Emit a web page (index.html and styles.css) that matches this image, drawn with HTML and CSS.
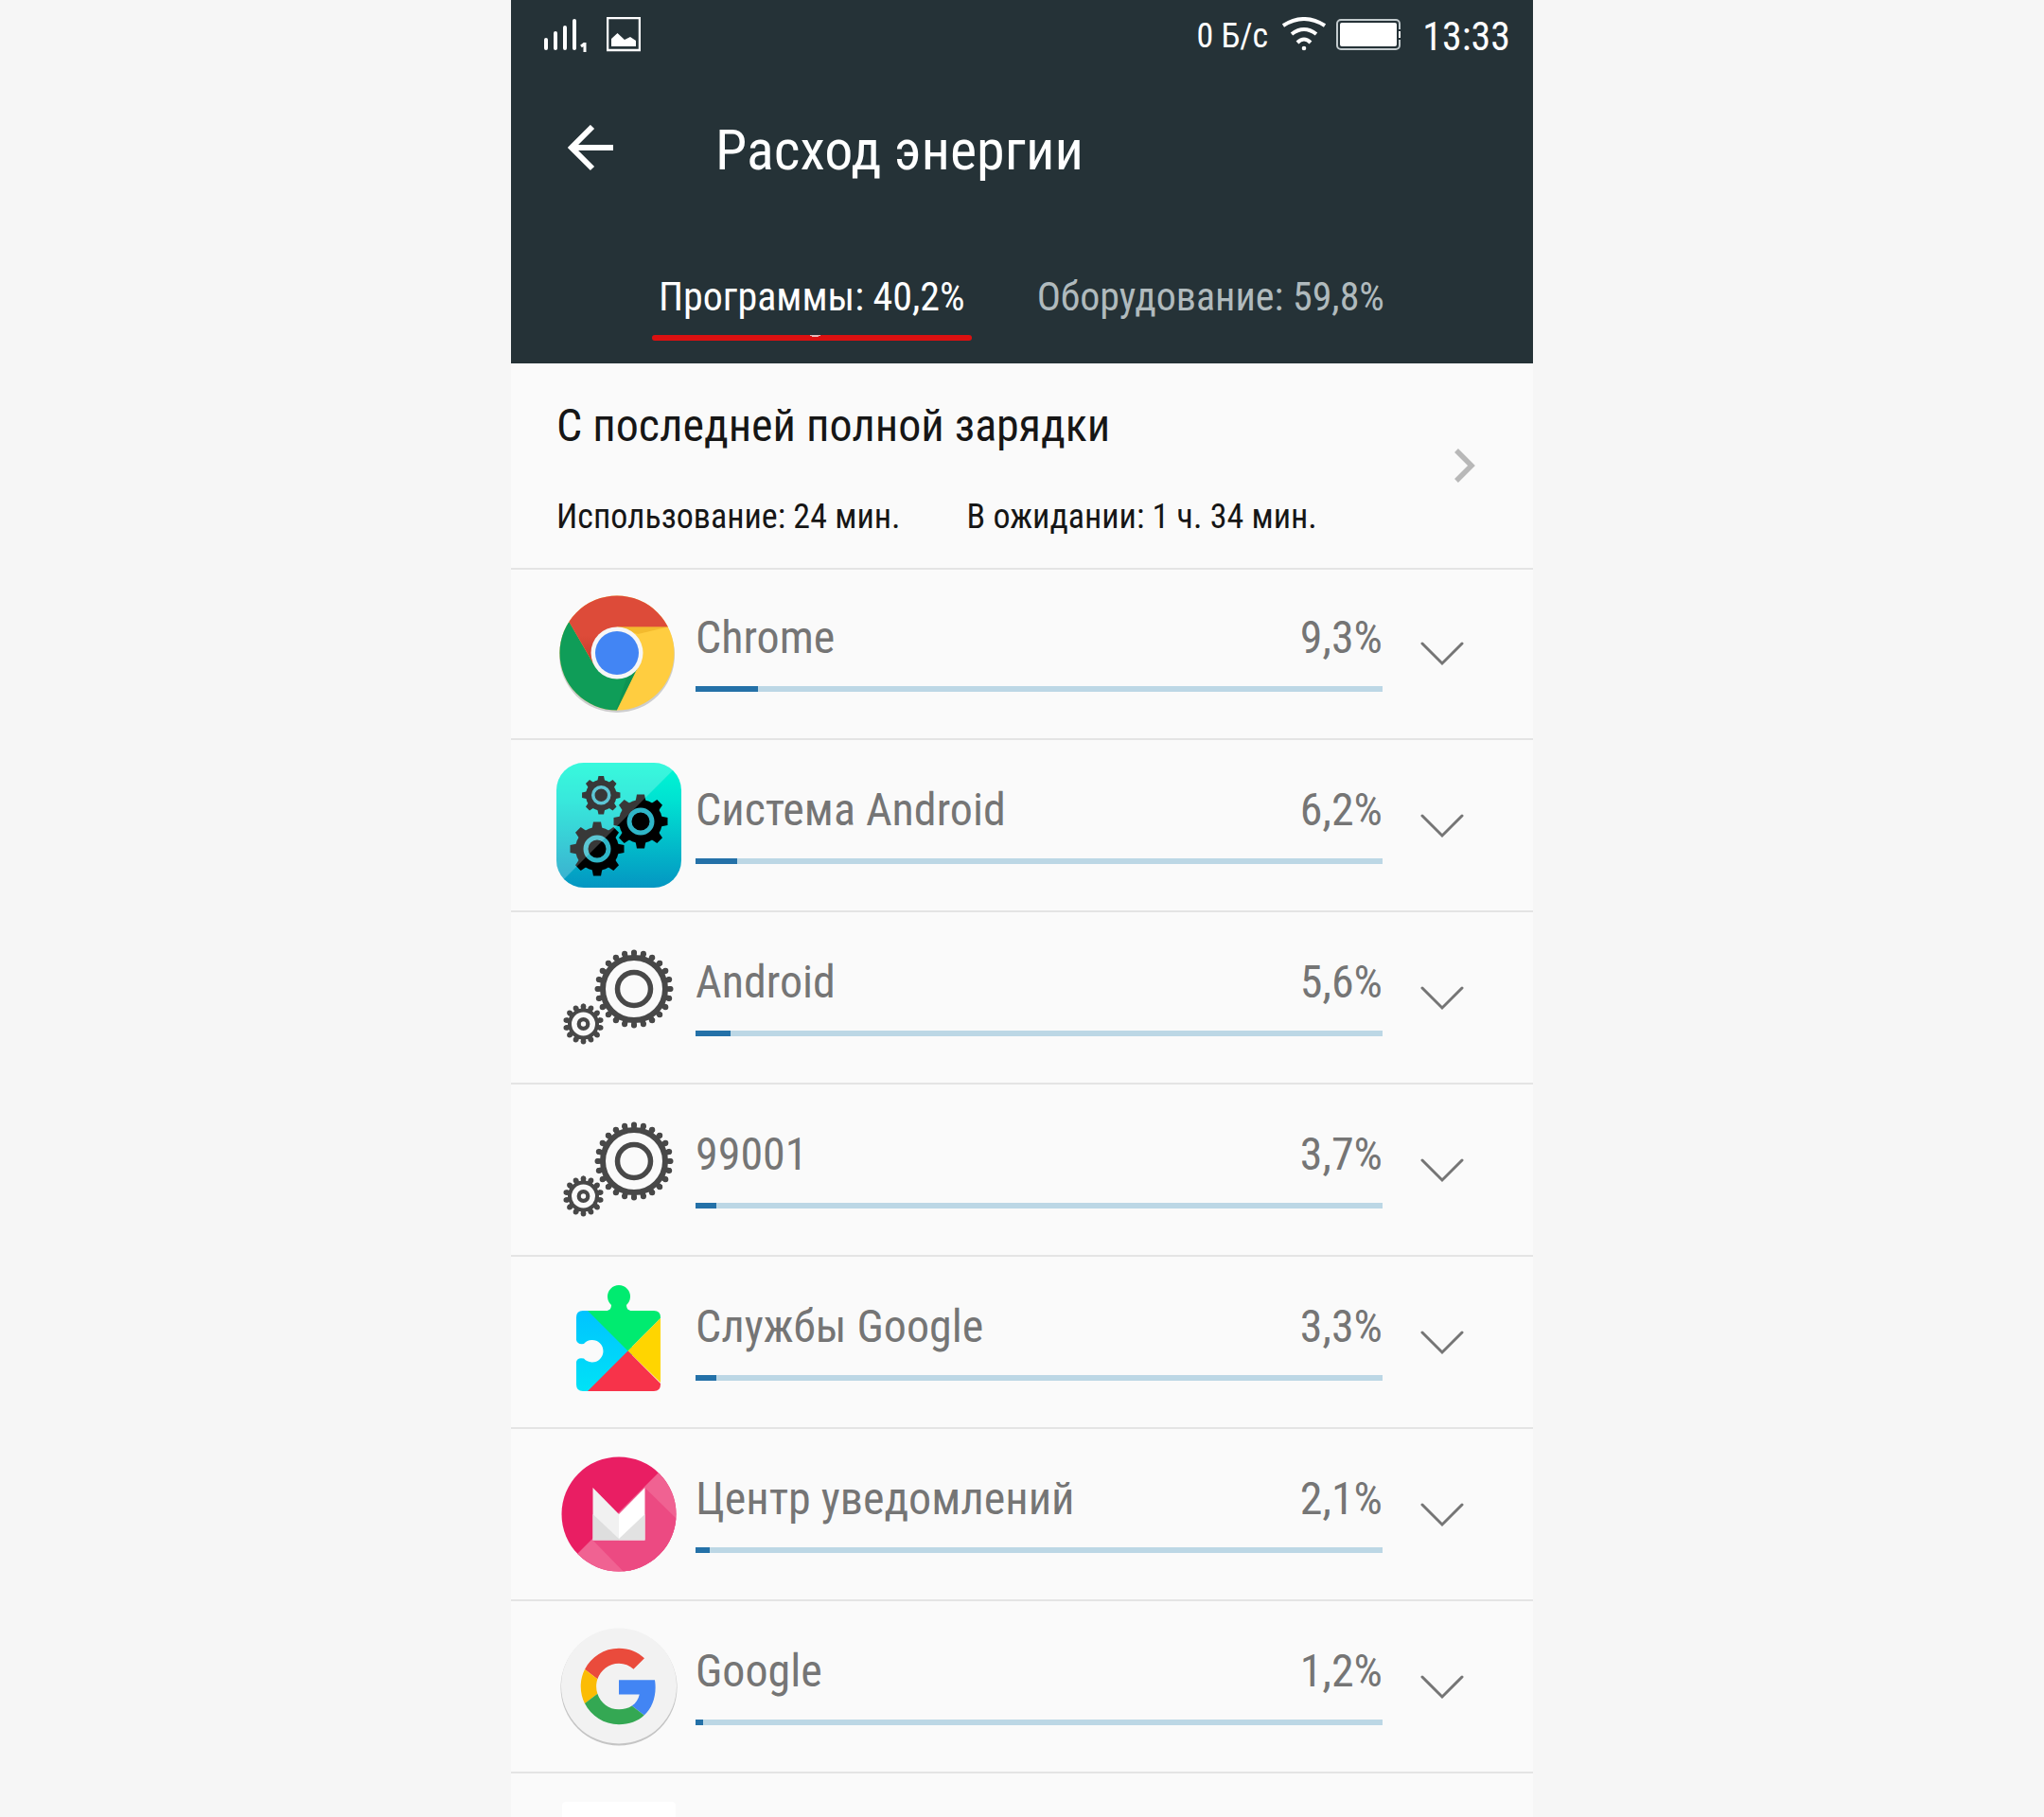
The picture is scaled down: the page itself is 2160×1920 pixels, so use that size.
FILE: index.html
```html
<!DOCTYPE html>
<html lang="ru">
<head>
  <meta charset="UTF-8">
  <title>Расход энергии</title>
  <link rel="stylesheet" href="styles.css">
</head>
<body>

  <!-- shared icons -->
  <svg class="sprite" aria-hidden="true">
    <symbol id="chevron" viewBox="0 0 48 32">
      <path d="M3 6 24 27 45 6" fill="none" stroke="#757575" stroke-width="3" stroke-linecap="round"/>
    </symbol>
    <symbol id="gears" viewBox="0 0 132 132">
      <g fill="none" stroke="#484848">
        <circle cx="82" cy="57" r="33" stroke-width="6"/>
        <circle cx="82" cy="57" r="37" stroke-width="5" pathLength="24" stroke-dasharray=".6 .4" stroke-dashoffset=".3"/>
        <circle cx="82" cy="57" r="38.5" stroke-width="6" stroke-linecap="round" pathLength="24" stroke-dasharray="0 1"/>
        <circle cx="82" cy="57" r="17.5" stroke-width="5.5"/>
        <circle cx="28.5" cy="94" r="14.5" stroke-width="4"/>
        <g transform="rotate(-90 28.5 94)">
          <circle cx="28.5" cy="94" r="17" stroke-width="4" pathLength="14" stroke-dasharray=".7 .3" stroke-dashoffset=".35"/>
          <circle cx="28.5" cy="94" r="18.7" stroke-width="5.5" stroke-linecap="round" pathLength="14" stroke-dasharray="0 1"/>
        </g>
        <circle cx="28.5" cy="94" r="4.8" stroke-width="4.2"/>
      </g>
    </symbol>
    <symbol id="cog" viewBox="-30 -30 60 60">
      <path id="teeth" d="M-5.5-21-4-28.5H4L5.5-21V21L4 28.5H-4L-5.5 21Z"/>
      <use href="#teeth" transform="rotate(45)"/>
      <use href="#teeth" transform="rotate(90)"/>
      <use href="#teeth" transform="rotate(135)"/>
      <circle r="23"/>
      <circle r="12" fill="none" stroke="#2fb6c8" stroke-width="5"/>
    </symbol>
  </svg>

  <main class="phone">
    <header class="header">
      <div class="status">
        <svg class="signal" viewBox="0 0 46 40" aria-hidden="true">
          <g stroke="#fff" stroke-width="4" stroke-linecap="round">
            <path d="M2 24V33M12 17V33M22 11V33M32 4V33"/>
          </g>
          <path d="M43 27V37M43 28 39 31" fill="none" stroke="#fff" stroke-width="3"/>
        </svg>
        <svg class="picture" viewBox="0 0 36 40" aria-hidden="true">
          <rect x="1" y="1" width="34" height="34" fill="none" stroke="#fff" stroke-width="2.5"/>
          <path d="M5 31V23L11.5 17 19 24 25 21 31 25V31Z" fill="#fff"/>
        </svg>
        <span class="speed">0 Б/с</span>
        <svg class="wifi" viewBox="0 0 46 40" aria-hidden="true">
          <g fill="none" stroke="#fff" stroke-width="4">
            <path d="M1 9Q23-5 45 9"/>
            <path d="M10 18Q23 8 36 18"/>
            <path d="M16 27Q23 20 30 27"/>
          </g>
          <circle cx="23" cy="33" r="2.3" fill="#fff"/>
        </svg>
        <svg class="battery" viewBox="0 0 68 36" aria-hidden="true">
          <rect x="1" y="1" width="66" height="31" rx="4" fill="none" stroke="#c3cbce" stroke-width="2"/>
          <rect x="4" y="4" width="60" height="25" rx="2" fill="#fff"/>
          <path d="M67 11V22" stroke="#253237" stroke-width="4"/>
          <path d="M67 13V20" stroke="#fff" stroke-width="2"/>
        </svg>
        <time class="clock">13:33</time>
      </div>

      <div class="toolbar">
        <button class="back" aria-label="Назад">
          <svg viewBox="0 0 48 52" aria-hidden="true">
            <path d="M26 2 4 24 26 46M4 24H48" fill="none" stroke="#fff" stroke-width="6"/>
          </svg>
        </button>
        <h1>Расход энергии</h1>
      </div>

      <nav class="tabs">
        <a href="#apps" class="tab active">Программы: 40,2%</a>
        <a href="#hardware" class="tab">Оборудование: 59,8%</a>
      </nav>
    </header>

    <a href="#history" class="summary">
      <div class="summary-text">
        <h2>С последней полной зарядки</h2>
        <p><span>Использование: 24 мин.</span><span>В ожидании: 1 ч. 34 мин.</span></p>
      </div>
      <svg class="next" viewBox="0 0 24 40" aria-hidden="true">
        <path d="M3 2 19 18 3 34" fill="none" stroke="#b8b8b8" stroke-width="5.5"/>
      </svg>
    </a>

    <ul class="apps" id="apps">
      <li class="app">
        <svg class="icon" viewBox="0 0 132 132" aria-hidden="true">
          <defs>
            <clipPath id="disc"><circle cx="64" cy="66" r="60.5"/></clipPath>
            <linearGradient id="red-shade" x1="0" y1="0" x2="0" y2="1">
              <stop offset=".6" stop-color="#dd4b39"/><stop offset="1" stop-color="#c53929"/>
            </linearGradient>
          </defs>
          <circle cx="64" cy="68" r="61" fill="#000" opacity=".18"/>
          <g clip-path="url(#disc)">
            <rect width="132" height="132" fill="#ffcd40"/>
            <path d="M14 34 40 79 64 93 86.5 80 62 130H0V20Z" fill="#0f9d58"/>
            <path d="M86.5 80 62 130 74 93Z" fill="#0b8a4b" opacity=".5"/>
            <path d="M64 38.5H132V0H0V10L40 79 50 66Z" fill="url(#red-shade)"/>
            <path d="M64 38.5H118L86 46Z" fill="#e8a81c" opacity=".5"/>
          </g>
          <circle cx="64" cy="66" r="27.5" fill="#f6f6f6"/>
          <circle cx="64" cy="66" r="23" fill="#4285f4"/>
        </svg>
        <div class="usage">
          <div class="line"><span>Chrome</span><span>9,3%</span></div>
          <div class="bar"><div class="fill" style="width: 9.1%"></div></div>
        </div>
        <button class="more" aria-label="Подробнее: Chrome"><svg><use href="#chevron"/></svg></button>
      </li>

      <li class="app">
        <svg class="icon" viewBox="0 0 132 132" aria-hidden="true">
          <defs>
            <linearGradient id="aqua" x1="0" y1="0" x2="0" y2="1">
              <stop offset="0" stop-color="#00f8d4"/><stop offset=".3" stop-color="#00e2d2"/>
              <stop offset="1" stop-color="#0496c2"/>
            </linearGradient>
            <clipPath id="tile"><rect width="132" height="132" rx="29"/></clipPath>
          </defs>
          <g clip-path="url(#tile)">
            <rect width="132" height="132" fill="url(#aqua)"/>
            <use href="#cog" x="26" y="13" width="42.5" height="42.5"/>
            <use href="#cog" x="59" y="32" width="60" height="60"/>
            <use href="#cog" x="13" y="61" width="60" height="60"/>
            <path d="M0 0H131L0 131Z" fill="#fff" opacity=".22"/>
          </g>
        </svg>
        <div class="usage">
          <div class="line"><span>Система Android</span><span>6,2%</span></div>
          <div class="bar"><div class="fill" style="width: 6.1%"></div></div>
        </div>
        <button class="more" aria-label="Подробнее: Система Android"><svg><use href="#chevron"/></svg></button>
      </li>

      <li class="app">
        <svg class="icon" aria-hidden="true"><use href="#gears"/></svg>
        <div class="usage">
          <div class="line"><span>Android</span><span>5,6%</span></div>
          <div class="bar"><div class="fill" style="width: 5.1%"></div></div>
        </div>
        <button class="more" aria-label="Подробнее: Android"><svg><use href="#chevron"/></svg></button>
      </li>

      <li class="app">
        <svg class="icon" aria-hidden="true"><use href="#gears"/></svg>
        <div class="usage">
          <div class="line"><span>99001</span><span>3,7%</span></div>
          <div class="bar"><div class="fill" style="width: 3%"></div></div>
        </div>
        <button class="more" aria-label="Подробнее: 99001"><svg><use href="#chevron"/></svg></button>
      </li>

      <li class="app">
        <svg class="icon" viewBox="0 0 132 132" aria-hidden="true">
          <defs>
            <clipPath id="puzzle">
              <path d="M28 33H54Q58 32 58 27A12 12 0 1 1 74 27Q74 32 78 33H103Q110 33 110 40V111Q110 118 103 118H28Q21 118 21 111V87Q22 82 29 83.5A11.7 11.7 0 1 0 29 68Q22 69 21 64V40Q21 33 28 33Z"/>
            </clipPath>
            <linearGradient id="sky" x1="0" y1="0" x2="0" y2="1">
              <stop offset="0" stop-color="#00c3ff"/><stop offset="1" stop-color="#00e3f6"/>
            </linearGradient>
          </defs>
          <g clip-path="url(#puzzle)">
            <rect x="20" y="32" width="60" height="88" fill="url(#sky)"/>
            <path d="M75.5 75.5 33 33V0H110V41Z" fill="#00eb70"/>
            <path d="M75.5 75.5 112 39V111Z" fill="#ffd500"/>
            <path d="M75.5 75.5 32 119H119Z" fill="#f7334a"/>
          </g>
        </svg>
        <div class="usage">
          <div class="line"><span>Службы Google</span><span>3,3%</span></div>
          <div class="bar"><div class="fill" style="width: 3%"></div></div>
        </div>
        <button class="more" aria-label="Подробнее: Службы Google"><svg><use href="#chevron"/></svg></button>
      </li>

      <li class="app">
        <svg class="icon" viewBox="0 0 132 132" aria-hidden="true">
          <defs><clipPath id="round"><circle cx="66" cy="66" r="60.5"/></clipPath></defs>
          <g clip-path="url(#round)">
            <rect width="132" height="132" fill="#e91e63"/>
            <path d="M132-2V132H-2Z" fill="#f06292"/>
            <path d="M93.5 38 132 76V132H76L38.5 93.5Z" fill="#ec4a82"/>
          </g>
          <path d="M38.5 38 66 66V93.5H38.5Z" fill="#f1f1f1"/>
          <path d="M93.5 38 66 66V93.5H93.5Z" fill="#fff"/>
          <path d="M38.5 66 66 92V93.5H38.5Z" fill="#dedede"/>
          <path d="M93.5 66 66 92V93.5H93.5Z" fill="#e2e2e2"/>
        </svg>
        <div class="usage">
          <div class="line"><span>Центр уведомлений</span><span>2,1%</span></div>
          <div class="bar"><div class="fill" style="width: 2.1%"></div></div>
        </div>
        <button class="more" aria-label="Подробнее: Центр уведомлений"><svg><use href="#chevron"/></svg></button>
      </li>

      <li class="app">
        <svg class="icon" viewBox="0 0 132 132" aria-hidden="true">
          <circle cx="66" cy="67" r="61.5" fill="#c4c4c4"/>
          <circle cx="66" cy="65.5" r="61" fill="#f2f2f2"/>
          <g transform="translate(25.7 25.7) scale(1.68)">
            <path fill="#ea4b3c" d="M24 9.5c3.54 0 6.71 1.22 9.21 3.6l6.85-6.85C35.9 2.38 30.47 0 24 0 14.62 0 6.51 5.38 2.56 13.22l7.98 6.19C12.43 13.72 17.74 9.5 24 9.5z"/>
            <path fill="#4285f4" d="M46.98 24.55c0-1.57-.15-3.09-.38-4.55H24v9.02h12.94c-.58 2.96-2.26 5.48-4.78 7.18l7.73 6c4.51-4.18 7.09-10.36 7.09-17.65z"/>
            <path fill="#fbbc05" d="M10.53 28.59c-.48-1.45-.76-2.99-.76-4.59s.27-3.14.76-4.59l-7.98-6.19C.92 16.46 0 20.12 0 24c0 3.88.92 7.54 2.56 10.78l7.97-6.19z"/>
            <path fill="#34a853" d="M24 48c6.48 0 11.93-2.13 15.89-5.81l-7.73-6c-2.15 1.45-4.92 2.3-8.16 2.3-6.26 0-11.57-4.22-13.47-9.91l-7.98 6.19C6.51 42.62 14.62 48 24 48z"/>
          </g>
        </svg>
        <div class="usage">
          <div class="line"><span>Google</span><span>1,2%</span></div>
          <div class="bar"><div class="fill" style="width: 1.1%"></div></div>
        </div>
        <button class="more" aria-label="Подробнее: Google"><svg><use href="#chevron"/></svg></button>
      </li>

      <li class="app">
        <svg class="icon" viewBox="0 0 132 132" aria-hidden="true">
          <rect x="6" y="6" width="120" height="120" rx="4" fill="#fff"/>
        </svg>
      </li>
    </ul>
  </main>

</body>
</html>
```
FILE: styles.css
```css
:root {
  --page: #f6f6f6;
  --surface: #fafafa;
  --header: #253237;
  --divider: #e4e4e4;
  --text: #161616;
  --muted: #757575;
  --bar: #bcd7e5;
  --fill: #2471a8;
  --accent: #dc1010;
}

* {
  box-sizing: border-box;
}

body {
  margin: 0;
  height: 100vh;
  overflow: hidden;
  background: var(--page);
  color: var(--text);
  font-family: "Roboto Condensed", Roboto, sans-serif;
}

h1,
h2,
p,
ul {
  margin: 0;
  padding: 0;
  font-weight: 400;
}

a {
  color: inherit;
  text-decoration: none;
}

button {
  padding: 0;
  border: none;
  background: none;
  cursor: pointer;
}

svg {
  display: block;
  flex: none;
}

.sprite {
  width: 0;
  height: 0;
  position: absolute;
}

.phone {
  width: 50%;
  margin: 0 auto;
  background: var(--surface);
}

/* header */
.header {
  background: var(--header);
  color: #fff;
  padding-bottom: 24px;
}

.status {
  display: flex;
  align-items: center;
  height: 76px;
  padding: 0 24px 0 35px;
}

.signal {
  width: 46px;
  height: 40px;
}

.picture {
  width: 36px;
  height: 40px;
  margin-left: 20px;
}

.speed {
  margin-left: auto;
  font-size: 36px;
}

.wifi {
  width: 46px;
  height: 40px;
  margin: 0 11px 0 15px;
}

.battery {
  width: 68px;
  height: 36px;
}

.clock {
  margin-left: 23px;
  font-size: 42px;
}

.toolbar {
  display: flex;
  align-items: center;
  height: 164px;
  padding-left: 60px;
}

.back svg {
  width: 48px;
  height: 52px;
}

h1 {
  margin-left: 108px;
  font-size: 60px;
}

.tabs {
  display: flex;
  gap: 62px;
  padding: 50px 0 0 149px;
}

.tab {
  padding: 0 7px;
  font-size: 42px;
  line-height: 48px;
  color: #b0babd;
  white-space: nowrap;
}

.tab.active {
  color: #fff;
}

.tab::after {
  content: "";
  display: block;
  height: 6px;
  margin: 16px -7px 0;
  border-radius: 3px;
}

.tab.active::after {
  background: radial-gradient(ellipse 6px 2px at 51% 0, #e8b8b8 90%, var(--accent));
}

/* last charge */
.summary {
  display: flex;
  align-items: center;
  padding: 38px 60px 34px 48px;
  border-bottom: 2px solid var(--divider);
}

.summary-text {
  flex: 1;
}

h2 {
  font-size: 48px;
  line-height: 56px;
}

.summary p {
  display: flex;
  gap: 70px;
  margin-top: 48px;
  font-size: 36px;
  line-height: 40px;
}

.next {
  width: 24px;
  height: 40px;
}

/* app list */
.apps {
  list-style: none;
}

.app {
  display: flex;
  align-items: center;
  padding: 24px 72px 24px 48px;
  border-bottom: 2px solid var(--divider);
}

.app:first-child {
  padding-top: 22px;
}

.icon {
  width: 132px;
  height: 132px;
}

.usage {
  flex: 1;
  margin: 0 39px 4px 15px;
}

.line {
  display: flex;
  justify-content: space-between;
  color: var(--muted);
  font-size: 48px;
  line-height: 56px;
}

.bar {
  height: 6px;
  margin-top: 23px;
  background: var(--bar);
}

.fill {
  height: 100%;
  background: var(--fill);
}

.more svg {
  width: 48px;
  height: 32px;
}
```
